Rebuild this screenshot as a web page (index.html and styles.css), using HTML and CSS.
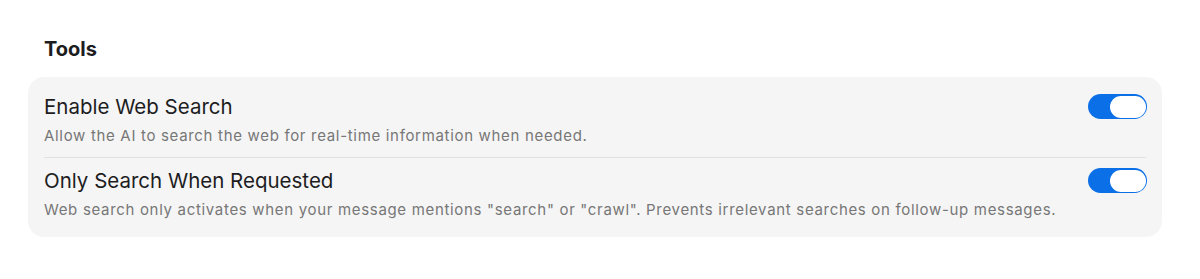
FILE: index.html
```html
<!DOCTYPE html>
<html>
<head>
<meta charset="utf-8">
<link rel="stylesheet" href="styles.css">
</head>
<body>
<div class="page">
  <h2 class="section-title">Tools</h2>
  <div class="card">
    <div class="row">
      <div class="text">
        <div class="label">Enable Web Search</div>
        <div class="desc">Allow the AI to search the web for real-time information when needed.</div>
      </div>
      <div class="toggle on"><div class="knob"></div></div>
    </div>
    <div class="divider"></div>
    <div class="row">
      <div class="text">
        <div class="label">Only Search When Requested</div>
        <div class="desc">Web search only activates when your message mentions "search" or "crawl". Prevents irrelevant searches on follow-up messages.</div>
      </div>
      <div class="toggle on"><div class="knob"></div></div>
    </div>
  </div>
</div>
</body>
</html>
```
FILE: styles.css
```css
html, body {
  margin: 0;
  padding: 0;
  background: #ffffff;
}
body {
  font-family: Inter, "Helvetica Neue", Arial, sans-serif;
  color: #1d1d1f;
}
.page {
  padding: 37px 38px 0 28px;
}
.section-title {
  margin: 0 0 16px 16px;
  font-size: 20px;
  font-weight: 700;
  line-height: 24px;
  color: #1d1d1f;
}
.card {
  background: #f5f5f5;
  border-radius: 16px;
  padding: 18px 15px 18px 16px;
}
.row {
  display: flex;
  align-items: flex-start;
  justify-content: space-between;
}
.text {
  display: flex;
  flex-direction: column;
  gap: 8px;
}
.label {
  font-size: 20.5px;
  line-height: 24px;
  color: #1d1d1f;
}
.desc {
  font-size: 15px;
  line-height: 18px;
  letter-spacing: 0.68px;
  color: #777777;
}
.divider {
  height: 1px;
  background: #e2e2e2;
  margin: 12px 1px 11px 0;
}
.toggle {
  width: 59px;
  height: 25px;
  border-radius: 13px;
  background: #0b6fe8;
  display: flex;
  align-items: center;
  padding: 0 1.5px;
  box-sizing: border-box;
  margin-top: -1px;
}
.toggle.on {
  justify-content: flex-end;
}
.knob {
  width: 36px;
  height: 22px;
  border-radius: 11px;
  background: #ffffff;
}
```
